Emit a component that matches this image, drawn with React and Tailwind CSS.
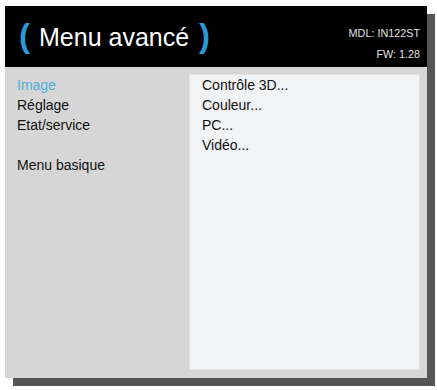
export default function App() {
  const leftItems = [
    { label: 'Image', active: true },
    { label: 'Réglage' },
    { label: 'Etat/service' },
    { label: '' },
    { label: 'Menu basique' },
  ];
  const subItems = ['Contrôle 3D...', 'Couleur...', 'PC...', 'Vidéo...'];

  return (
    <div className="w-[437px] h-[390px] bg-white pt-[6px] pl-[5px] font-['Liberation_Sans',Arial,sans-serif]">
      <div className="w-[422px] h-[372px] flex flex-col shadow-[8px_8px_0_#555555]">
        {/* Header */}
        <div className="h-[61px] bg-black flex items-center justify-between">
          <div className="flex items-center pl-[14px]">
            <span className="text-[#2a9ad6] text-[33px] font-bold leading-none -mt-[3px]">(</span>
            <span className="text-white text-[25px] leading-none ml-[9px] mt-[1px]">Menu avancé</span>
            <span className="text-[#2a9ad6] text-[33px] font-bold leading-none ml-[10px] -mt-[3px]">)</span>
          </div>
          <div className="flex flex-col items-end pr-[7px] pt-[17px] text-[10.8px] leading-[21px] text-[#e0e0e0] self-start">
            <span>MDL: IN122ST</span>
            <span>FW: 1.28</span>
          </div>
        </div>

        {/* Body */}
        <div className="flex-1 bg-[#d6d6d6] flex pt-[7px] pb-[8px] pr-[7px]">
          <div className="w-[184px] pl-[12px] pt-[1px] text-[14px] leading-[20px] text-[#111]">
            {leftItems.map((it, i) => (
              <div key={i} className={it.active ? 'text-[#4cb0dc] h-[20px]' : 'h-[20px]'}>
                {it.label}
              </div>
            ))}
          </div>
          <div className="flex-1 bg-[#f2f3f5] border border-[#e3e3e3] pl-[12px] text-[14px] leading-[20px] text-[#111]">
            {subItems.map((s) => (
              <div key={s}>{s}</div>
            ))}
          </div>
        </div>
      </div>
    </div>
  );
}
